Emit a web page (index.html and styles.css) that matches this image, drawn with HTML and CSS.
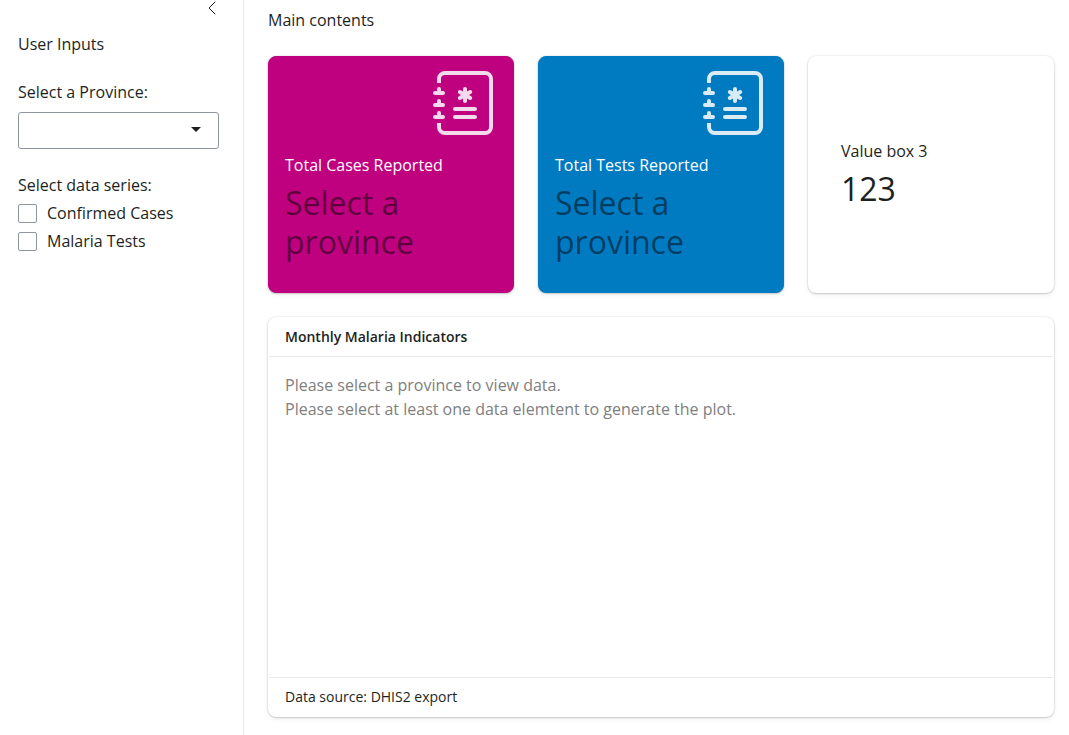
FILE: index.html
```html
<!DOCTYPE html>
<html lang="en">
<head>
<meta charset="utf-8">
<meta name="viewport" content="width=device-width, initial-scale=1">
<title>Malaria Indicators</title>
<link rel="stylesheet" href="styles.css">
</head>
<body>
<svg class="sprite" aria-hidden="true">
  <symbol id="journal-medical" viewBox="0 0 16 16">
    <path fill-rule="evenodd" d="M8 4a.5.5 0 0 1 .5.5v.634l.549-.317a.5.5 0 1 1 .5.866L9 6l.549.317a.5.5 0 1 1-.5.866L8.5 6.866V7.5a.5.5 0 0 1-1 0v-.634l-.549.317a.5.5 0 1 1-.5-.866L7 6l-.549-.317a.5.5 0 0 1 .5-.866l.549.317V4.5A.5.5 0 0 1 8 4zM5 9.5a.5.5 0 0 1 .5-.5h5a.5.5 0 0 1 0 1h-5a.5.5 0 0 1-.5-.5zm0 2a.5.5 0 0 1 .5-.5h5a.5.5 0 0 1 0 1h-5a.5.5 0 0 1-.5-.5z"/>
    <path d="M3 0h10a2 2 0 0 1 2 2v12a2 2 0 0 1-2 2H3a2 2 0 0 1-2-2v-1h1v1a1 1 0 0 0 1 1h10a1 1 0 0 0 1-1V2a1 1 0 0 0-1-1H3a1 1 0 0 0-1 1v1H1V2a2 2 0 0 1 2-2z"/>
    <path d="M1 5v-.5a.5.5 0 0 1 1 0V5h.5a.5.5 0 0 1 0 1h-2a.5.5 0 0 1 0-1H1zm0 3v-.5a.5.5 0 0 1 1 0V8h.5a.5.5 0 0 1 0 1h-2a.5.5 0 0 1 0-1H1zm0 3v-.5a.5.5 0 0 1 1 0v.5h.5a.5.5 0 0 1 0 1h-2a.5.5 0 0 1 0-1H1z"/>
  </symbol>
</svg>
<div class="layout">
  <aside class="sidebar">
    <button class="collapse" type="button" aria-label="Toggle sidebar">
      <svg viewBox="0 0 16 16" width="16" height="16" fill="none" stroke="currentColor" stroke-linecap="round" stroke-linejoin="round"><path d="M12 2L6 8l6 6"/></svg>
    </button>
    <div class="sidebar-title">User Inputs</div>
    <div class="field">
      <label for="province">Select a Province:</label>
      <div class="select-wrap">
        <select id="province" class="select"><option value=""></option></select>
      </div>
    </div>
    <fieldset class="series">
      <legend>Select data series:</legend>
      <label class="check"><input type="checkbox" name="series" value="cases"><span>Confirmed Cases</span></label>
      <label class="check"><input type="checkbox" name="series" value="tests"><span>Malaria Tests</span></label>
    </fieldset>
  </aside>
  <main class="main">
    <div>Main contents</div>
    <div class="boxes">
      <section class="card value-box magenta">
        <svg class="box-icon" aria-hidden="true"><use href="#journal-medical"/></svg>
        <p class="box-title">Total Cases Reported</p>
        <p class="box-value pending">Select a province</p>
      </section>
      <section class="card value-box blue">
        <svg class="box-icon" aria-hidden="true"><use href="#journal-medical"/></svg>
        <p class="box-title">Total Tests Reported</p>
        <p class="box-value pending">Select a province</p>
      </section>
      <section class="card value-box plain">
        <p class="box-title">Value box 3</p>
        <p class="box-value">123</p>
      </section>
    </div>
    <section class="card plot">
      <header class="card-header">Monthly Malaria Indicators</header>
      <div class="card-body">
        <p>Please select a province to view data.</p>
        <p>Please select at least one data elemtent to generate the plot.</p>
      </div>
      <footer class="card-footer">Data source: DHIS2 export</footer>
    </section>
  </main>
</div>
</body>
</html>
```
FILE: styles.css
```css
* { box-sizing: border-box; }
body {
  margin: 0;
  font-family: "Open Sans", "Noto Sans", sans-serif;
  font-size: 16px;
  line-height: 24px;
  color: #1d1f21;
  background: #fff;
}
p { margin: 0; }
.sprite { display: none; }
.layout { display: flex; min-height: 100vh; }

.sidebar {
  flex: 0 0 244px;
  display: flex;
  flex-direction: column;
  padding: 0 24px 24px 18px;
  border-right: 1px solid #e8e8e8;
}
.collapse {
  align-self: flex-end;
  display: flex;
  margin: 0 0 16px;
  padding: 0;
  border: 0;
  background: none;
  color: #1d1f21;
}
.sidebar-title { margin-bottom: 24px; }
.field { display: flex; flex-direction: column; gap: 8px; margin-bottom: 24px; }
.select-wrap { position: relative; }
.select-wrap::after {
  content: "";
  position: absolute;
  top: 15px;
  right: 18px;
  border: 5px solid transparent;
  border-top-color: #1d1f21;
  border-bottom: 0;
  pointer-events: none;
}
.select {
  appearance: none;
  display: block;
  width: 100%;
  height: 37px;
  padding: 0 32px 0 12px;
  border: 1px solid #8d959e;
  border-radius: 3px;
  background: #fff;
  font: inherit;
}
.series { margin: 0; padding: 0; border: 0; }
.series legend { padding: 0; margin-bottom: 4px; }
.check { display: flex; align-items: center; gap: 10px; margin-bottom: 4px; }
.check input {
  appearance: none;
  width: 19px;
  height: 19px;
  margin: 0;
  border: 1px solid #8d959e;
  border-radius: 2px;
}

.main {
  flex: 1;
  min-width: 0;
  display: flex;
  flex-direction: column;
  gap: 24px;
  padding: 8px 15px 18px 24px;
}
.boxes { display: grid; grid-template-columns: repeat(3, 1fr); gap: 24px; }
.card {
  border: 1px solid transparent;
  border-radius: 8px;
  background: #fff;
  box-shadow: 0 1px 2px rgba(0, 0, 0, 0.15), 0 0 2px rgba(0, 0, 0, 0.15), 0 3px 7px rgba(0, 0, 0, 0.04);
}
.value-box { display: flex; flex-direction: column; }
.magenta, .blue { padding: 14px 16px 31px; color: #fff; }
.magenta { background: #bf007f; border-color: #bf007f; }
.blue { background: #007bc2; border-color: #007bc2; }
.plain { justify-content: center; padding: 16px 32px; }
.box-icon {
  align-self: flex-end;
  width: 64px;
  height: 64px;
  margin-bottom: 21px;
  fill: currentColor;
  opacity: 0.85;
}
.box-title { margin-bottom: 8px; line-height: 19px; }
.box-value { font-size: 32px; line-height: 39px; }
.pending { color: rgba(0, 0, 0, 0.5); }

.plot { flex: 1; display: flex; flex-direction: column; font-size: 14px; }
.card-header, .card-footer { padding: 8px 16px; line-height: 22px; }
.card-header { font-weight: 600; border-bottom: 1px solid #e8e8e8; }
.card-body { flex: 1; padding: 16px; font-size: 16px; color: #808080; }
.card-footer { border-top: 1px solid #e8e8e8; }
```
